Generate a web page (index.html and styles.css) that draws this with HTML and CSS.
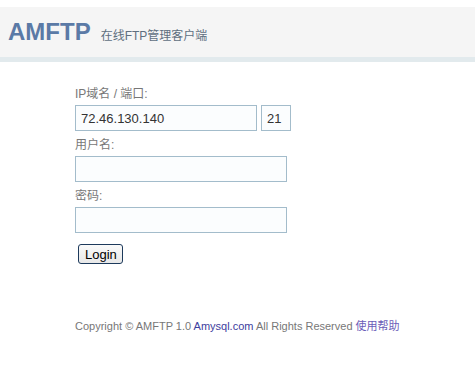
FILE: index.html
```html
<!DOCTYPE html>
<html lang="zh-CN">
<head>
  <meta charset="UTF-8" />
  <title>AMFTP 在线FTP管理客户端</title>
  <link rel="stylesheet" href="styles.css">
</head>
<body>
  <div class="header">
    <span class="logo">AMFTP</span>
    <span class="sub">在线FTP管理客户端</span>
  </div>

  <form class="login">
    <label>IP域名 / 端口:</label>
    <div class="row">
      <input type="text" class="host" value="72.46.130.140" />
      <input type="text" class="port" value="21" />
    </div>
    <label>用户名:</label>
    <input type="text" class="wide" />
    <label>密码:</label>
    <input type="password" class="wide" />
    <div class="btn-row"><button type="button">Login</button></div>
  </form>

  <div class="footer">
    Copyright © AMFTP 1.0 <a href="#">Amysql.com</a> All Rights Reserved <a href="#" class="help">使用帮助</a>
  </div>
</body>
</html>
```

FILE: styles.css
```css
*{box-sizing:border-box;margin:0;padding:0}
body{font-family:"Liberation Sans",Arial,"Noto Sans CJK SC",sans-serif;font-size:12px;color:#666;background:#fff;padding-top:7px}
.header{background:#f5f5f5;border-bottom:5px solid #e2eaed;height:55px;padding:11px 8px 0;display:flex;align-items:baseline}
.logo{font-size:24px;font-weight:bold;color:#5b7aa6}
.sub{font-size:12px;color:#5f6f7f;margin-left:10px}

/* login form */
.login{margin:25px 0 0 75px;display:flex;flex-direction:column;align-items:flex-start}
label{display:block;font-size:12px;color:#777;line-height:14px;margin-bottom:4px}
.row{display:flex;gap:4px;margin-bottom:7px}
input{height:26px;border:1px solid #a3bccb;background:#fbfdfe;font-family:"Liberation Sans",Arial,sans-serif;font-size:13px;color:#333;padding:0 5px;outline:none}
.host{width:182px}
.port{width:30px}
.wide{width:212px;margin-bottom:7px}
.btn-row{padding:4px 0 0 3px}
button{font-family:"Liberation Sans",Arial,sans-serif;font-size:13px;color:#000;background:linear-gradient(#fafafa,#e8e8e8);border:1px solid #1d3a5c;border-radius:3px;height:20px;padding:0 6px;width:45px}

.footer{margin:53px 0 0 75px;font-size:11px;color:#777}
.footer a{color:#3d3d9e;text-decoration:none}
.footer a.help{color:#6b5cb8}
```
